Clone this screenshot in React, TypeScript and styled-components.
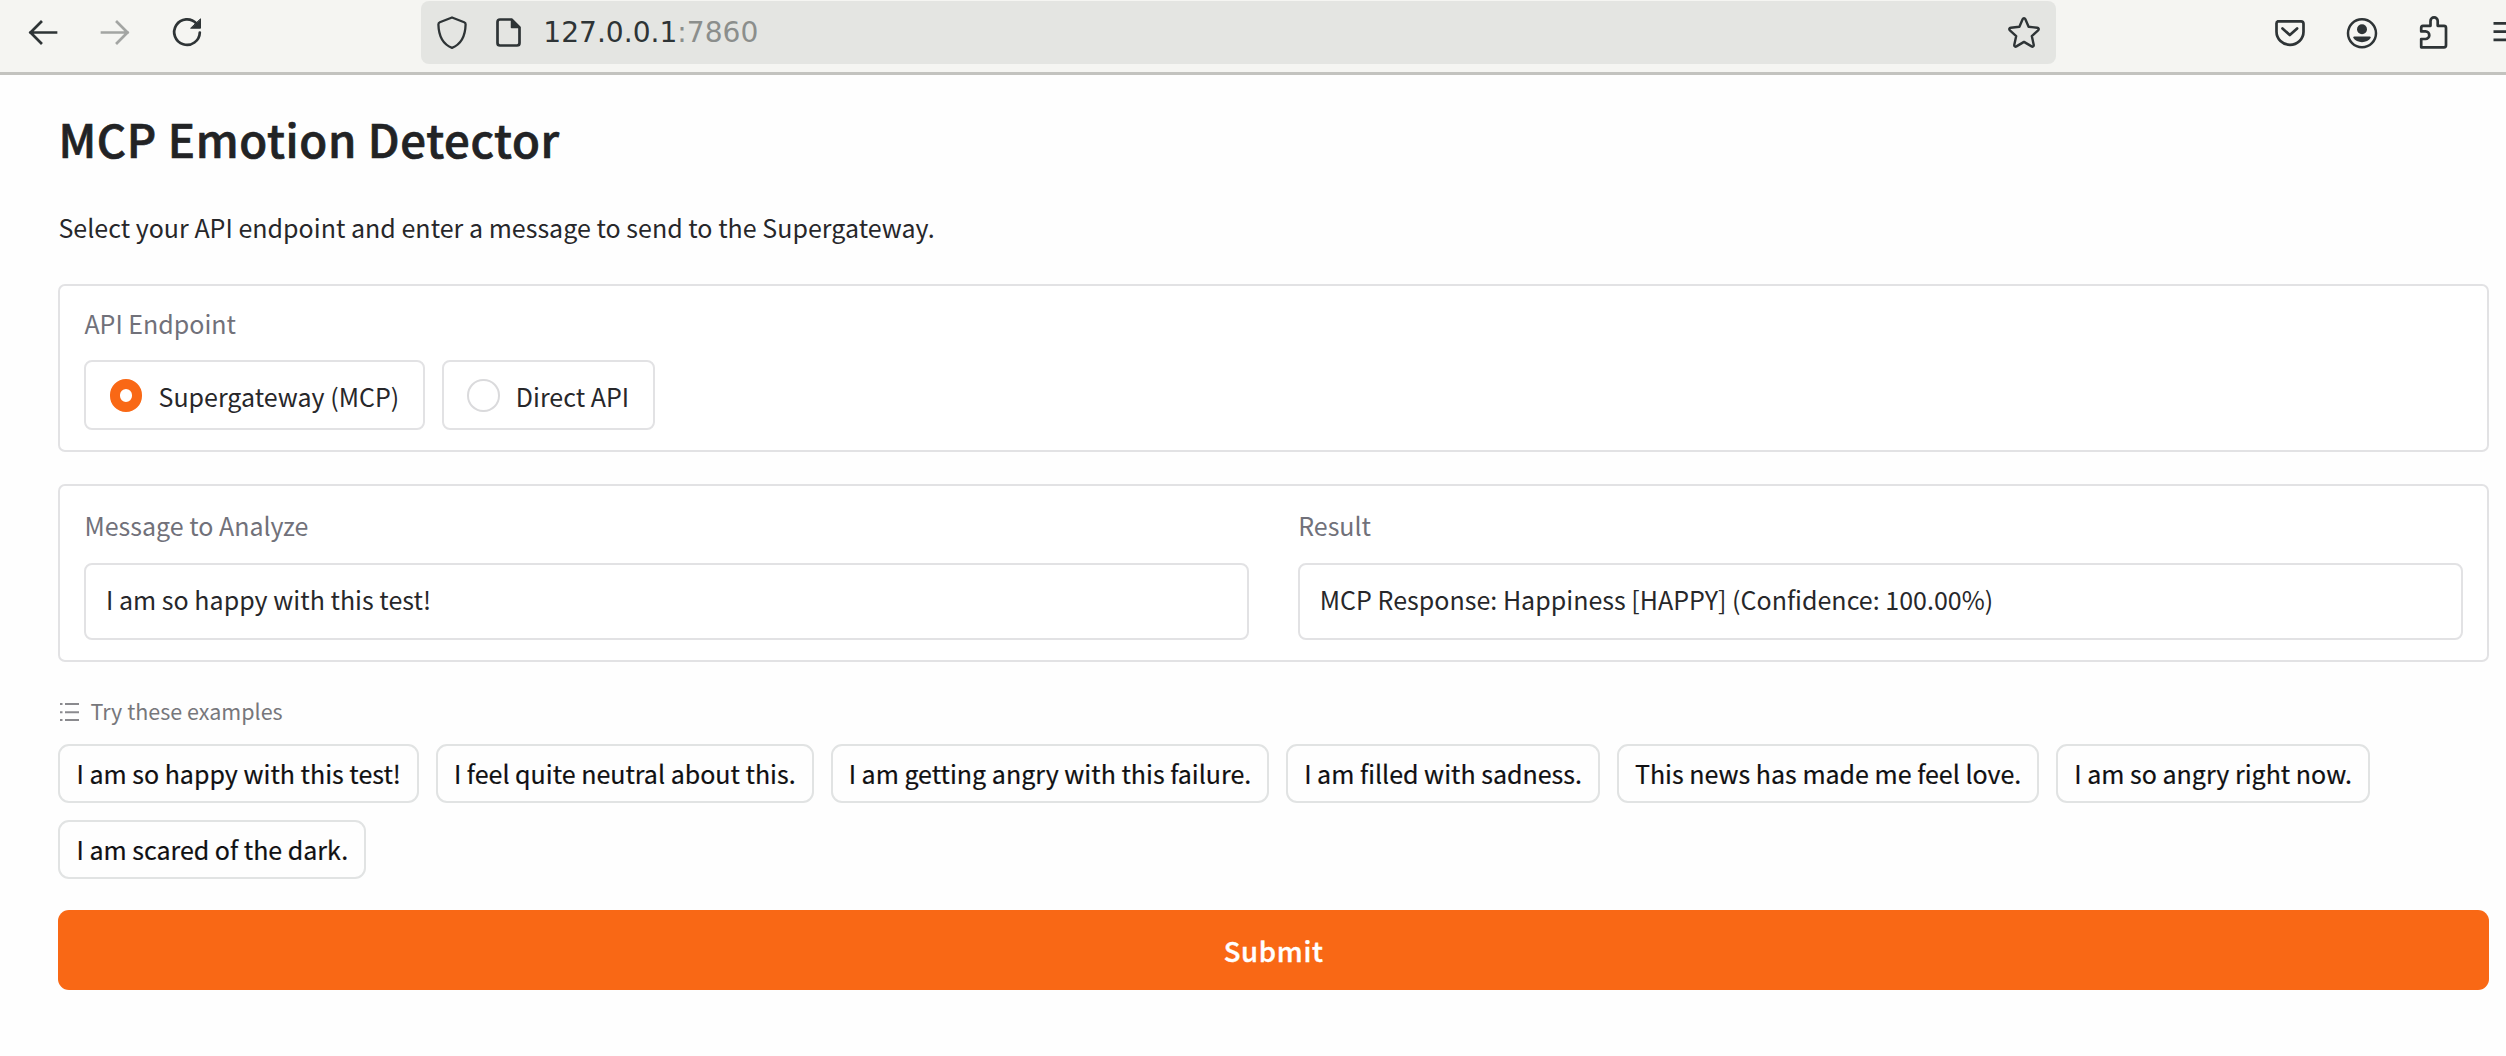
import React, { useState } from "react";
import styled, { createGlobalStyle } from "styled-components";

const GlobalStyle = createGlobalStyle`
  *, *::before, *::after { box-sizing: border-box; }
  html, body { margin: 0; background: #fefefe; overflow: hidden; }
  body { font-family: "Noto Sans CJK SC", "Noto Sans", sans-serif; color: #27272a; font-size: 25px; }
  button, input { font: inherit; color: inherit; margin: 0; }
`;

const Browser = styled.div`
  display: flex;
  flex-direction: column;
  height: 1056px;
  overflow: hidden;
`;

const Toolbar = styled.header`
  display: flex;
  align-items: flex-start;
  flex: none;
  height: 75px;
  background: #f5f5f2;
  border-bottom: 3px solid #c3c3bf;
  overflow: hidden;
`;

const NavButtons = styled.nav`
  display: flex;
  align-items: center;
  gap: 36px;
  flex: none;
  width: 421px;
  height: 64px;
  padding-left: 24.5px;
`;

const AddressBar = styled.div`
  display: flex;
  align-items: center;
  flex: none;
  width: 1635px;
  height: 63px;
  margin-top: 1px;
  padding: 0 14px 1px 13px;
  border-radius: 8px;
  background: #e4e5e2;
`;

const Address = styled.span`
  flex: 1;
  margin-left: 17.5px;
  padding-top: 2px;
  font-family: "DejaVu Sans", sans-serif;
  font-size: 28.1px;
  line-height: 34px;
  color: #2e3436;
`;

const Port = styled.span`
  color: #8b8e8c;
`;

const ToolButtons = styled.div`
  display: flex;
  align-items: center;
  gap: 36.5px;
  flex: none;
  height: 64px;
  margin-left: 215px;
`;

const Icon = styled.svg<{ $muted?: boolean; $gapLeft?: number }>`
  flex: none;
  display: block;
  width: 36px;
  height: 36px;
  margin-left: ${(p) => p.$gapLeft ?? 0}px;
  color: ${(p) => (p.$muted ? "#a3a5a3" : "#2e3436")};
  fill: none;
  stroke: currentColor;
  stroke-width: 2.7;
  stroke-linecap: round;
  stroke-linejoin: round;
`;

const Page = styled.main`
  display: flex;
  flex-direction: column;
  padding: 33px 17px 0 58.4px;
`;

const Title = styled.h1`
  margin: 0;
  font-size: 45.5px;
  line-height: 60px;
  font-weight: 500;
  letter-spacing: 0.64px;
  -webkit-text-stroke: 0.7px currentColor;
  color: #222325;
`;

const Intro = styled.p`
  margin: 41px 0 39px;
  line-height: 36px;
  letter-spacing: 0.02px;
`;

const Card = styled.section<{ $top: number }>`
  display: flex;
  flex-direction: column;
  padding: ${(p) => p.$top}px 24px 20px;
  border: 2px solid #e2e2e4;
  border-radius: 7px;
  background: #fff;
`;

const Label = styled.div`
  line-height: 36px;
  color: #71717a;
`;

const Options = styled.div`
  display: flex;
  gap: 17px;
  margin-top: 19px;
`;

const Option = styled.label`
  display: flex;
  align-items: center;
  gap: 16px;
  height: 70px;
  padding: 1px 23.6px 0;
  border: 2px solid #e2e2e4;
  border-radius: 8px;
`;

const Radio = styled.input`
  appearance: none;
  width: 32.5px;
  height: 32.5px;
  border: 2px solid #dadadc;
  border-radius: 50%;
  background: #fff;
  &:checked {
    border: 10px solid #f96815;
  }
`;

const Fields = styled.div`
  display: grid;
  grid-template-columns: 1fr 1fr;
  gap: 49px;
`;

const Field = styled.div`
  display: flex;
  flex-direction: column;
  gap: 20px;
`;

const Value = styled.div`
  height: 77px;
  padding: 15.5px 19.6px 0;
  border: 2px solid #e2e2e4;
  border-radius: 8px;
  line-height: 36px;
  letter-spacing: 0.02px;
`;

const Spacer = styled.div`
  height: 32px;
`;

const ExamplesLabel = styled.div`
  display: flex;
  align-items: center;
  gap: 10px;
  margin-top: 34px;
  font-size: 21.5px;
  line-height: 30px;
  color: #77777b;
`;

const ListIcon = styled.svg`
  width: 22px;
  height: 22px;
  fill: none;
  stroke: #8a8a8e;
  stroke-width: 1.9;
`;

const Chips = styled.div`
  display: flex;
  flex-wrap: wrap;
  gap: 17px 16.8px;
  margin-top: 18px;
`;

const Chip = styled.button`
  height: 59px;
  padding: 0 16.1px 1px;
  border: 2px solid #e1e3e3;
  border-radius: 11px;
  background: #fefefe;
  line-height: 36px;
  color: #101012;
  -webkit-text-stroke: 0.2px currentColor;
`;

const Submit = styled.button`
  height: 80px;
  margin-top: 31px;
  padding: 0 0 1px;
  border: 0;
  border-radius: 11px;
  background: #f96815;
  color: #fff;
  font-size: 27.5px;
  font-weight: 500;
  letter-spacing: 0.7px;
  -webkit-text-stroke: 0.4px currentColor;
`;

const examples = [
  "I am so happy with this test!",
  "I feel quite neutral about this.",
  "I am getting angry with this failure.",
  "I am filled with sadness.",
  "This news has made me feel love.",
  "I am so angry right now.",
  "I am scared of the dark.",
];

const endpoints = ["Supergateway (MCP)", "Direct API"];

function BrowserToolbar() {
  return (
    <Toolbar>
      <NavButtons>
        <Icon viewBox="0 0 36 36">
          <path d="M31 18.5H5.5M16 8 5.5 18.5 16 29" strokeLinecap="square" strokeLinejoin="miter" />
        </Icon>
        <Icon viewBox="0 0 36 36" $muted>
          <path d="M5 18.5h25.5M20 8l10.500 10.500L20 29" strokeLinecap="square" strokeLinejoin="miter" />
        </Icon>
        <Icon viewBox="0 0 36 36">
          <path d="M27.500 9.500A12.800 12.800 0 1 0 30.800 18.500" />
          <path d="M31.500 5.200v9h-9.500z" fill="currentColor" strokeWidth="1" />
        </Icon>
      </NavButtons>
      <AddressBar>
        <Icon viewBox="0 0 36 36">
          <path
            d="M18 3.500 30.200 8.300c1 .4 1.500 1 1.400 2.200C31.300 21.500 28 30 18 33.800 8 30 4.700 21.500 4.400 10.500c0-1.200.4-1.800 1.400-2.200z"
            strokeWidth="2.300"
          />
        </Icon>
        <Icon viewBox="0 0 36 36" $gapLeft={19.8}>
          <path d="M10 5.500h11.500l8 8V29a2.500 2.500 0 0 1-2.500 2.500H10A2.500 2.500 0 0 1 7.500 29V8A2.500 2.500 0 0 1 10 5.500z" />
          <path d="M21.500 5.500v8h8z" fill="currentColor" strokeWidth="1.500" />
        </Icon>
        <Address>
          127.0.0.1<Port>:7860</Port>
        </Address>
        <Icon viewBox="0 0 36 36">
          <path
            d="M16.600 5.200c.6-1.300 2.200-1.300 2.800 0l3.200 7.600 8.600.9c1.500.2 2 1.700.9 2.700l-6.300 5.700 1.900 8.700c.3 1.400-.9 2.300-2.100 1.600L18 27.900l-7.600 4.500c-1.200.7-2.400-.2-2.100-1.600l1.900-8.700-6.300-5.700c-1.100-1-.6-2.500.9-2.700l8.600-.9z"
            strokeWidth="2.400"
          />
        </Icon>
      </AddressBar>
      <ToolButtons>
        <Icon viewBox="0 0 36 36">
          <path d="M7 7.300h23a2.500 2.500 0 0 1 2.500 2.500v8a13.500 13 0 0 1-27 0v-8A2.500 2.500 0 0 1 7 7.300z" />
          <path d="m11.500 14.500 7.300 6.600 7.300-6.600" />
        </Icon>
        <Icon viewBox="0 0 36 36">
          <circle cx="18" cy="19.300" r="14" strokeWidth="2.500" />
          <circle cx="18" cy="15.200" r="5" fill="currentColor" stroke="none" />
          <path d="M10.200 22.500h15.600c.8 0 1.200.8.8 1.500-3 5.500-14.200 5.500-17.200 0-.4-.7 0-1.500.8-1.500z" fill="currentColor" stroke="none" />
        </Icon>
        <Icon viewBox="0 0 36 36">
          <path d="M7 11.800h7.500V7a3.600 3.600 0 0 1 7.200 0v4.800H28a2 2 0 0 1 2 2v17.500a2 2 0 0 1-2 2H5.200V25h4.300a3.800 3.800 0 0 0 0-7.600H5.200v-3.600a2 2 0 0 1 1.800-2z" />
        </Icon>
        <Icon viewBox="0 0 36 36">
          <path d="M4.500 9.300H32M4.500 17.600H32M4.500 25.800H32" strokeLinecap="butt" />
        </Icon>
      </ToolButtons>
    </Toolbar>
  );
}

export default function App() {
  const [endpoint, setEndpoint] = useState(endpoints[0]);
  const [message, setMessage] = useState(examples[0]);

  return (
    <Browser>
      <GlobalStyle />
      <BrowserToolbar />
      <Page>
        <Title>MCP Emotion Detector</Title>
        <Intro>Select your API endpoint and enter a message to send to the Supergateway.</Intro>
        <Card $top={19}>
          <Label>API Endpoint</Label>
          <Options>
            {endpoints.map((name) => (
              <Option key={name}>
                <Radio
                  type="radio"
                  name="endpoint"
                  checked={endpoint === name}
                  onChange={() => setEndpoint(name)}
                />
                <span>{name}</span>
              </Option>
            ))}
          </Options>
        </Card>
        <Spacer />
        <Card $top={21}>
          <Fields>
            <Field>
              <Label>Message to Analyze</Label>
              <Value>{message}</Value>
            </Field>
            <Field>
              <Label>Result</Label>
              <Value>MCP Response: Happiness [HAPPY] (Confidence: 100.00%)</Value>
            </Field>
          </Fields>
        </Card>
        <ExamplesLabel>
          <ListIcon viewBox="0 0 22 22">
            <path d="M7 4h14M7 12.300h14M7 20h14M2 4h2.500M2 12.300h2.500M2 20h2.500" />
          </ListIcon>
          Try these examples
        </ExamplesLabel>
        <Chips>
          {examples.map((text) => (
            <Chip key={text} onClick={() => setMessage(text)}>
              {text}
            </Chip>
          ))}
        </Chips>
        <Submit>Submit</Submit>
      </Page>
    </Browser>
  );
}
